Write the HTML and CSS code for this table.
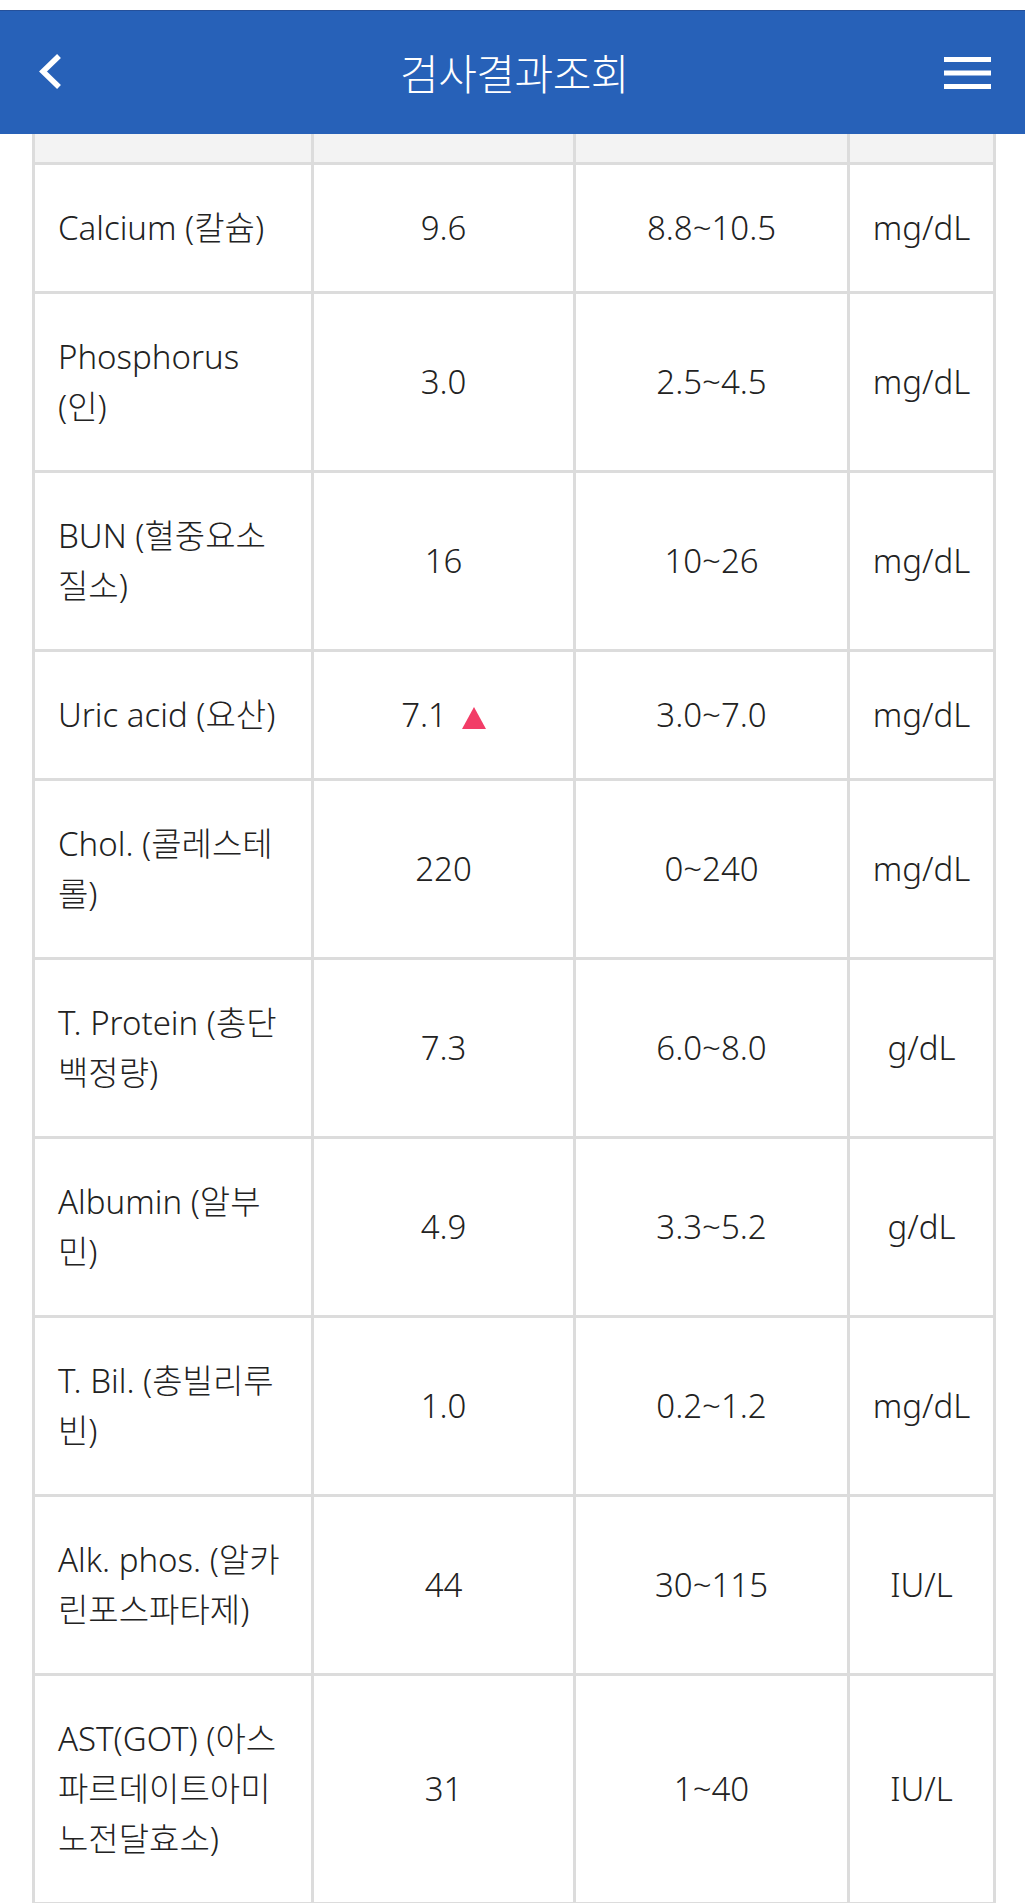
FILE: index.html
```html
<!DOCTYPE html>
<html lang="ko">
<head>
<meta charset="utf-8">
<title>검사결과조회</title>
<link rel="stylesheet" href="styles.css">
</head>
<body>
<div class="top-strip"></div>
<header class="appbar">
  <div class="appbar-left">
    <svg class="icon-back" width="30" height="40" viewBox="0 0 30 40" aria-hidden="true">
      <path d="M21 3 L5 18.5 L21 34" fill="none" stroke="#fff" stroke-width="5.5" stroke-linecap="butt" stroke-linejoin="miter"/>
    </svg>
  </div>
  <h1 class="appbar-title">검사결과조회</h1>
  <div class="appbar-right">
    <svg class="icon-menu" width="47" height="32" viewBox="0 0 47 32" aria-hidden="true">
      <rect x="0" y="0" width="47" height="5" fill="#fff"/>
      <rect x="0" y="13.5" width="47" height="5" fill="#fff"/>
      <rect x="0" y="27" width="47" height="5" fill="#fff"/>
    </svg>
  </div>
</header>
<main class="content">
  <table class="results">
    <colgroup>
      <col class="c-name">
      <col class="c-val">
      <col class="c-ref">
      <col class="c-unit">
    </colgroup>
    <thead>
      <tr class="head-row"><th></th><th></th><th></th><th></th></tr>
    </thead>
    <tbody>
      <tr><td class="name">Calcium (칼슘)</td><td>9.6</td><td>8.8~10.5</td><td>mg/dL</td></tr>
      <tr><td class="name">Phosphorus<br>(인)</td><td>3.0</td><td>2.5~4.5</td><td>mg/dL</td></tr>
      <tr><td class="name">BUN (혈중요소<br>질소)</td><td>16</td><td>10~26</td><td>mg/dL</td></tr>
      <tr><td class="name">Uric acid (요산)</td><td>7.1<span class="high" aria-label="높음"></span></td><td>3.0~7.0</td><td>mg/dL</td></tr>
      <tr><td class="name">Chol. (콜레스테<br>롤)</td><td>220</td><td>0~240</td><td>mg/dL</td></tr>
      <tr><td class="name">T. Protein (총단<br>백정량)</td><td>7.3</td><td>6.0~8.0</td><td>g/dL</td></tr>
      <tr><td class="name">Albumin (알부<br>민)</td><td>4.9</td><td>3.3~5.2</td><td>g/dL</td></tr>
      <tr><td class="name">T. Bil. (총빌리루<br>빈)</td><td>1.0</td><td>0.2~1.2</td><td>mg/dL</td></tr>
      <tr><td class="name">Alk. phos. (알카<br>린포스파타제)</td><td>44</td><td>30~115</td><td>IU/L</td></tr>
      <tr><td class="name">AST(GOT) (아스<br>파르데이트아미<br>노전달효소)</td><td>31</td><td>1~40</td><td>IU/L</td></tr>
    </tbody>
  </table>
</main>
</body>
</html>
```

FILE: styles.css
```css
html, body {
  margin: 0;
  padding: 0;
  background: #fff;
}

body {
  font-family: "Noto Sans", "Noto Sans CJK KR", sans-serif;
  color: #222;
}

.top-strip {
  height: 10px;
  background: #fff;
}

.appbar {
  height: 124px;
  background: #2761b8;
  border-top: 1px solid #25509a;
  box-sizing: border-box;
  display: grid;
  grid-template-columns: 1fr auto 1fr;
  align-items: center;
  padding: 0 34px 0 38px;
}

.appbar-left {
  display: flex;
  align-items: center;
  justify-content: flex-start;
}

.appbar-right {
  display: flex;
  align-items: center;
  justify-content: flex-end;
}

.icon-back, .icon-menu {
  display: block;
}

.appbar-title {
  margin: 0 0 2px;
  font-family: "Noto Sans CJK KR", sans-serif;
  font-weight: 300;
  font-size: 42px;
  line-height: 1;
  color: #fff;
  letter-spacing: -0.5px;
}

.content {
  padding: 0 31px 0 32px;
}

.results {
  width: 961px;
  table-layout: fixed;
  border-collapse: collapse;
  border: 3px solid #dcdcdc;
  border-top: none;
  font-size: 33px;
  font-weight: 300;
}

.c-name { width: 279px; }
.c-val  { width: 262px; }
.c-ref  { width: 274px; }
.c-unit { width: 146px; }

.results th,
.results td {
  border: 3px solid #dcdcdc;
  padding: 38px 6px;
  line-height: 50px;
  text-align: center;
  vertical-align: middle;
  font-weight: 300;
}

.results .head-row th {
  background: #f3f3f3;
  border-top: none;
  height: 28px;
  padding: 0;
}

.results td.name {
  text-align: left;
  padding-left: 23px;
  padding-right: 2px;
}

.high {
  display: inline-block;
  width: 0;
  height: 0;
  margin-left: 15px;
  border-left: 12px solid transparent;
  border-right: 12px solid transparent;
  border-bottom: 22px solid #f23d67;
  vertical-align: -2px;
}
```
